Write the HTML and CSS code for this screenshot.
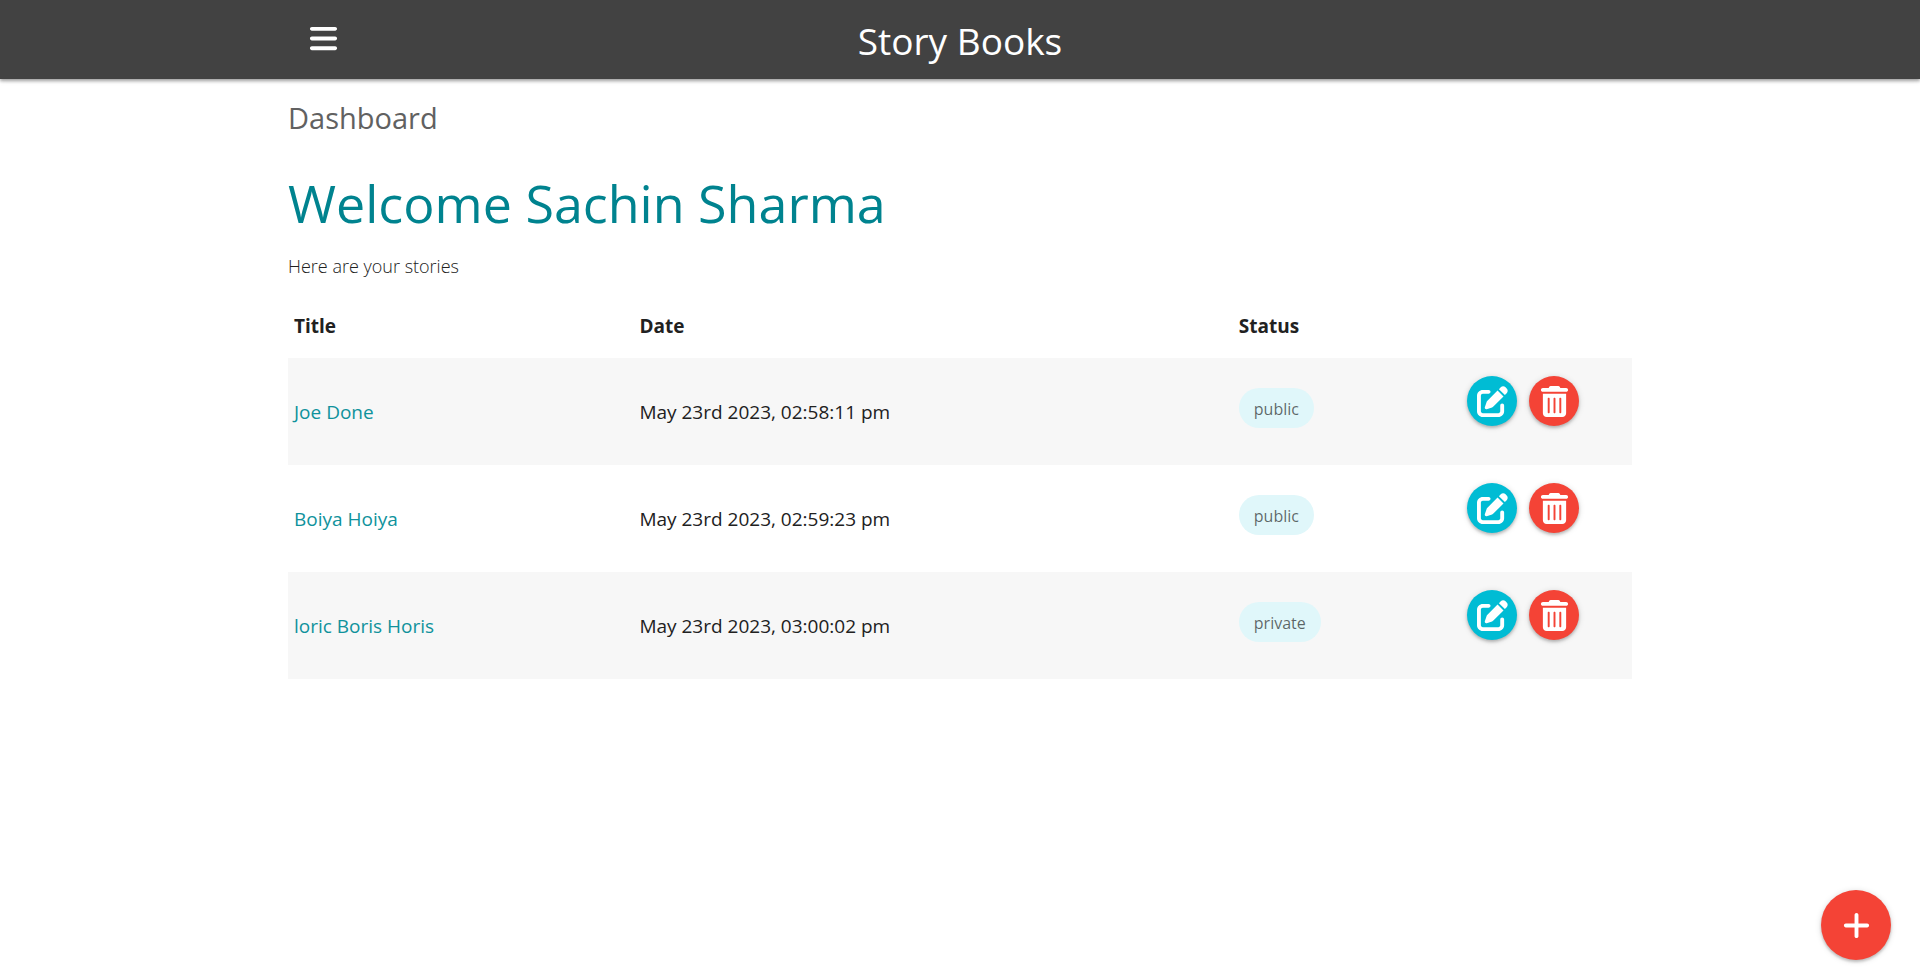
FILE: index.html
```html
<!DOCTYPE html>
<html lang="en">
<head>
<meta charset="utf-8">
<meta name="viewport" content="width=device-width, initial-scale=1">
<title>Story Books</title>
<link rel="stylesheet" href="styles.css">
</head>
<body>
<svg class="sprite" aria-hidden="true">
  <symbol id="bars" viewBox="0 0 448 512"><path d="M0 96C0 78.300 14.300 64 32 64H416c17.700 0 32 14.300 32 32s-14.300 32-32 32H32C14.300 128 0 113.700 0 96zM0 256c0-17.700 14.300-32 32-32H416c17.700 0 32 14.300 32 32s-14.300 32-32 32H32c-17.700 0-32-14.300-32-32zM448 416c0 17.700-14.300 32-32 32H32c-17.700 0-32-14.300-32-32s14.300-32 32-32H416c17.700 0 32 14.300 32 32z"/></symbol>
  <symbol id="edit" viewBox="0 0 512 512"><path d="M471.600 21.700c-21.900-21.900-57.300-21.900-79.200 0L362.300 51.700l97.900 97.900 30.100-30.100c21.900-21.900 21.900-57.300 0-79.200L471.600 21.700zm-299.200 220c-6.100 6.100-10.800 13.600-13.500 21.900l-29.600 88.800c-2.900 8.600-.6 18.100 5.800 24.600s15.900 8.700 24.600 5.800l88.800-29.600c8.200-2.700 15.700-7.400 21.900-13.500L437.700 172.300 339.700 74.300 172.400 241.700zM96 64C43 64 0 107 0 160V416c0 53 43 96 96 96H352c53 0 96-43 96-96V320c0-17.700-14.300-32-32-32s-32 14.300-32 32v96c0 17.700-14.300 32-32 32H96c-17.700 0-32-14.300-32-32V160c0-17.700 14.300-32 32-32h96c17.700 0 32-14.300 32-32s-14.300-32-32-32H96z"/></symbol>
  <symbol id="trash" viewBox="0 0 448 512"><path d="M135.200 17.700C140.600 6.800 151.700 0 163.800 0H284.200c12.100 0 23.200 6.800 28.600 17.700L320 32h96c17.700 0 32 14.300 32 32s-14.300 32-32 32H32C14.300 96 0 81.700 0 64S14.300 32 32 32h96l7.200-14.300zM32 128H416V448c0 35.300-28.700 64-64 64H96c-35.300 0-64-28.700-64-64V128zm96 64c-8.800 0-16 7.200-16 16V432c0 8.800 7.200 16 16 16s16-7.200 16-16V208c0-8.800-7.200-16-16-16zm96 0c-8.800 0-16 7.200-16 16V432c0 8.800 7.200 16 16 16s16-7.200 16-16V208c0-8.800-7.200-16-16-16zm96 0c-8.800 0-16 7.200-16 16V432c0 8.800 7.200 16 16 16s16-7.200 16-16V208c0-8.800-7.200-16-16-16z"/></symbol>
  <symbol id="plus" viewBox="0 0 448 512"><path d="M256 80c0-17.700-14.300-32-32-32s-32 14.300-32 32V224H48c-17.700 0-32 14.300-32 32s14.300 32 32 32H192V432c0 17.700 14.300 32 32 32s32-14.300 32-32V288H400c17.700 0 32-14.300 32-32s-14.300-32-32-32H256V80z"/></symbol>
</svg>

<header class="navbar">
  <nav class="container navbar-inner">
    <button class="menu-button" type="button" aria-label="Menu"><svg class="icon"><use href="#bars"/></svg></button>
    <a class="brand" href="#">Story Books</a>
  </nav>
</header>

<main class="container">
  <h6 class="page-name">Dashboard</h6>
  <h3 class="welcome">Welcome Sachin Sharma</h3>
  <p class="intro">Here are your stories</p>
  <table class="stories">
    <colgroup><col class="col-title"><col class="col-date"><col class="col-status"><col></colgroup>
    <thead>
      <tr><th>Title</th><th>Date</th><th>Status</th><th></th></tr>
    </thead>
    <tbody>
      <tr>
        <td><a href="#">Joe Done</a></td>
        <td>May 23rd 2023, 02:58:11 pm</td>
        <td class="status"><span class="chip">public</span></td>
        <td class="actions"><div class="action-group">
          <a class="round-button edit" href="#" aria-label="Edit"><svg class="icon"><use href="#edit"/></svg></a>
          <button class="round-button delete" type="button" aria-label="Delete"><svg class="icon"><use href="#trash"/></svg></button>
        </div></td>
      </tr>
      <tr>
        <td><a href="#">Boiya Hoiya</a></td>
        <td>May 23rd 2023, 02:59:23 pm</td>
        <td class="status"><span class="chip">public</span></td>
        <td class="actions"><div class="action-group">
          <a class="round-button edit" href="#" aria-label="Edit"><svg class="icon"><use href="#edit"/></svg></a>
          <button class="round-button delete" type="button" aria-label="Delete"><svg class="icon"><use href="#trash"/></svg></button>
        </div></td>
      </tr>
      <tr>
        <td><a href="#">loric Boris Horis</a></td>
        <td>May 23rd 2023, 03:00:02 pm</td>
        <td class="status"><span class="chip">private</span></td>
        <td class="actions"><div class="action-group">
          <a class="round-button edit" href="#" aria-label="Edit"><svg class="icon"><use href="#edit"/></svg></a>
          <button class="round-button delete" type="button" aria-label="Delete"><svg class="icon"><use href="#trash"/></svg></button>
        </div></td>
      </tr>
    </tbody>
  </table>
</main>

<a class="add-button" href="#" aria-label="Add story"><svg class="icon"><use href="#plus"/></svg></a>
</body>
</html>
```
FILE: styles.css
```css
* {
  box-sizing: border-box;
}

body {
  margin: 0;
  background: #fff;
  color: #212121;
  font-family: "Segoe UI", "Open Sans", "Noto Sans", sans-serif;
  font-size: 19px;
  line-height: 28px;
}

a {
  color: #0f929c;
  text-decoration: none;
}

.sprite {
  display: none;
}

.icon {
  display: block;
  width: 31px;
  height: 31px;
  fill: currentColor;
}

.container {
  width: 70%;
  margin: 0 auto;
}

.navbar {
  background: #424242;
  box-shadow: 0 2px 3px rgba(0, 0, 0, 0.3), 0 1px 6px rgba(0, 0, 0, 0.15);
}

.navbar-inner {
  display: grid;
  grid-template-columns: 1fr auto 1fr;
  align-items: center;
  height: 79px;
}

.menu-button {
  justify-self: start;
  margin: 0 0 2px 20px;
  padding: 0;
  border: 0;
  background: none;
  color: #fff;
  cursor: pointer;
}

.brand {
  padding-top: 2px;
  color: #fff;
  font-size: 37px;
  line-height: 77px;
}

.page-name {
  margin: 19px 0 0;
  color: #616161;
  font-size: 29px;
  font-weight: 400;
  line-height: 40px;
}

.welcome {
  margin: 33px 0 0;
  color: #00838f;
  font-size: 52px;
  font-weight: 400;
  line-height: 64px;
}

.intro {
  margin: 17px 0 0;
  font-size: 18px;
  font-weight: 300;
}

.stories {
  width: 100%;
  margin-top: 14px;
  border-collapse: collapse;
  table-layout: fixed;
}

.stories th {
  height: 64px;
  padding: 0 6px;
  font-weight: 700;
  text-align: left;
}

.stories td {
  height: 107px;
  padding: 0 6px;
}

.stories tbody tr:nth-child(odd) {
  background: #f7f7f7;
}

.col-title {
  width: 25.7%;
}

.col-date {
  width: 44.6%;
}

.col-status {
  width: 17%;
}

.stories .status {
  padding-top: 30px;
  vertical-align: top;
}

.chip {
  display: inline-block;
  padding: 2px 15px 0;
  border-radius: 20px;
  background: #e0f7fa;
  color: rgba(0, 0, 0, 0.6);
  font-size: 16px;
  font-weight: 500;
  line-height: 38px;
}

.stories .actions {
  padding-top: 18px;
  vertical-align: top;
}

.action-group {
  display: flex;
  gap: 12px;
}

.round-button,
.add-button {
  display: flex;
  align-items: center;
  justify-content: center;
  padding: 0;
  border: 0;
  border-radius: 50%;
  color: #fff;
  box-shadow: 0 2px 3px rgba(0, 0, 0, 0.2), 0 1px 6px rgba(0, 0, 0, 0.15);
  cursor: pointer;
}

.round-button {
  width: 50px;
  height: 50px;
}

.edit {
  background: #00bcd4;
}

.delete,
.add-button {
  background: #f44336;
}

.add-button {
  position: fixed;
  right: 29px;
  bottom: 16px;
  width: 70px;
  height: 70px;
}
```
